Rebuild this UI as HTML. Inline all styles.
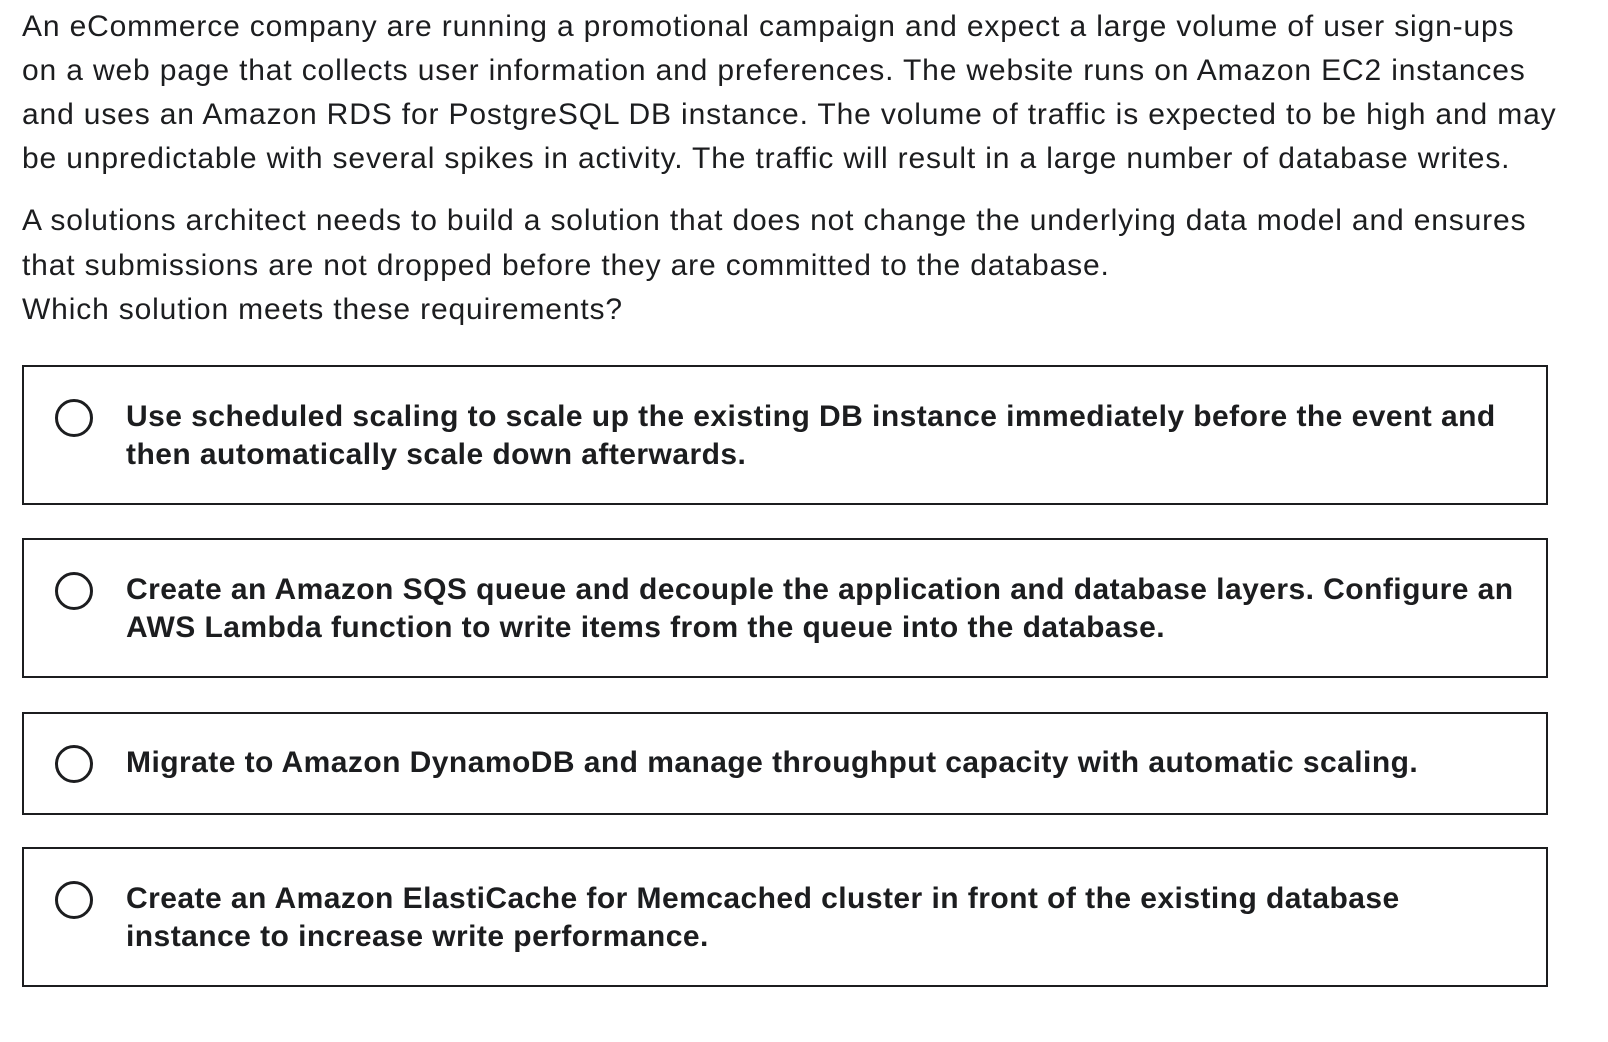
<!DOCTYPE html>
<html><head><meta charset="utf-8"><style>
html,body{margin:0;padding:0;background:#fff;width:1608px;height:1042px;overflow:hidden}
body{font-family:"Liberation Sans",sans-serif;color:#1c1d1f;position:relative}
.l{position:absolute;left:22px;font-size:30px;white-space:nowrap;line-height:1;letter-spacing:0.85px}
.box{position:absolute;left:22px;width:1526px;border:2px solid #1c1d1f;box-sizing:border-box}
.c{position:absolute;left:54px;width:38px;height:38px;border:3px solid #1c1d1f;border-radius:50%;box-sizing:border-box}
.t{position:absolute;left:126px;font-weight:bold;font-size:30px;line-height:38px;white-space:nowrap;letter-spacing:0.45px}
</style></head><body>
<div class="l" style="top:12px">An eCommerce company are running a promotional campaign and expect a large volume of user sign-ups</div>
<div class="l" style="top:56px">on a web page that collects user information and preferences. The website runs on Amazon EC2 instances</div>
<div class="l" style="top:100px">and uses an Amazon RDS for PostgreSQL DB instance. The volume of traffic is expected to be high and may</div>
<div class="l" style="top:144px">be unpredictable with several spikes in activity. The traffic will result in a large number of database writes.</div>
<div class="l" style="top:206px">A solutions architect needs to build a solution that does not change the underlying data model and ensures</div>
<div class="l" style="top:251px">that submissions are not dropped before they are committed to the database.</div>
<div class="l" style="top:295px">Which solution meets these requirements?</div>

<div class="box" style="top:365px;height:140px">
<div class="c" style="left:31px;top:32px"></div>
<div class="t" style="left:102px;top:31px">Use scheduled scaling to scale up the existing DB instance immediately before the event and<br>then automatically scale down afterwards.</div>
</div>
<div class="box" style="top:538px;height:140px">
<div class="c" style="left:31px;top:32px"></div>
<div class="t" style="left:102px;top:31px">Create an Amazon SQS queue and decouple the application and database layers. Configure an<br>AWS Lambda function to write items from the queue into the database.</div>
</div>
<div class="box" style="top:712px;height:103px">
<div class="c" style="left:31px;top:31px"></div>
<div class="t" style="left:102px;top:30px">Migrate to Amazon DynamoDB and manage throughput capacity with automatic scaling.</div>
</div>
<div class="box" style="top:847px;height:140px">
<div class="c" style="left:31px;top:32px"></div>
<div class="t" style="left:102px;top:31px">Create an Amazon ElastiCache for Memcached cluster in front of the existing database<br>instance to increase write performance.</div>
</div>
</body></html>
